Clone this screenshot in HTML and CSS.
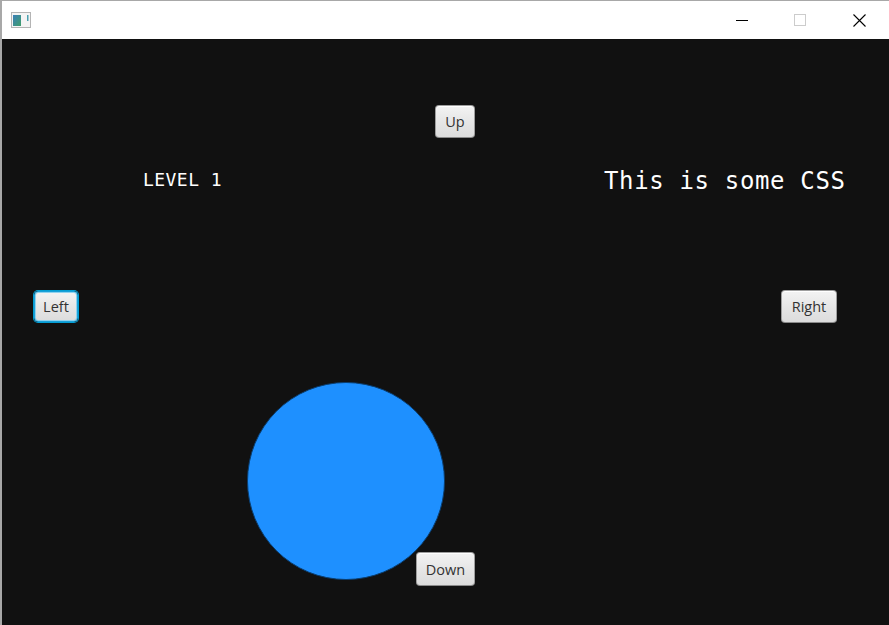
FILE: index.html
```html
<!DOCTYPE html>
<html>
<head>
<meta charset="utf-8">
<link rel="stylesheet" href="styles.css">
</head>
<body>
<div class="window">
  <div class="titlebar">
    <div class="app-icon">
      <svg width="20" height="16" viewBox="0 0 20 16">
        <defs>
          <linearGradient id="g" x1="0" y1="0" x2="1" y2="1">
            <stop offset="0" stop-color="#3b7fb8"/>
            <stop offset="1" stop-color="#3f9e6a"/>
          </linearGradient>
        </defs>
        <rect x="0.5" y="0.5" width="19" height="15" fill="#f4f4f4" stroke="#b4b4b4"/>
        <rect x="2" y="3" width="8" height="11" fill="url(#g)"/>
        <rect x="16" y="3" width="1.5" height="6" fill="#4aa0b0"/>
      </svg>
    </div>
    <div class="controls">
      <div class="ctl">
        <svg width="12" height="12" viewBox="0 0 12 12"><path d="M0 6.5H12" stroke="#000" stroke-width="1"/></svg>
      </div>
      <div class="ctl">
        <svg width="12" height="12" viewBox="0 0 12 12"><rect x="0.5" y="0.5" width="11" height="11" fill="none" stroke="#cccccc"/></svg>
      </div>
      <div class="ctl">
        <svg width="13" height="13" viewBox="0 0 13 13"><path d="M0.5 0.5L12.5 12.5M12.5 0.5L0.5 12.5" stroke="#000" stroke-width="1.1"/></svg>
      </div>
    </div>
  </div>
  <div class="scene">
    <div class="level">LEVEL 1</div>
    <div class="css-text">This is some CSS</div>
    <button class="btn btn-up">Up</button>
    <button class="btn btn-left focused">Left</button>
    <button class="btn btn-right">Right</button>
    <div class="ball"></div>
    <button class="btn btn-down">Down</button>
  </div>
</div>
</body>
</html>
```

FILE: styles.css
```css
html, body {
  margin: 0;
  padding: 0;
  width: 889px;
  height: 625px;
  overflow: hidden;
  background: #111111;
}

.window {
  width: 889px;
  height: 625px;
  display: flex;
  flex-direction: column;
  box-sizing: border-box;
  border-left: 2px solid #a8a8a8;
  border-top: 1px solid #a8a8a8;
}

.titlebar {
  height: 38px;
  flex: 0 0 38px;
  background: #ffffff;
  display: flex;
  align-items: center;
  justify-content: space-between;
}

.app-icon {
  width: 20px;
  height: 16px;
  margin-left: 9px;
  display: flex;
}

.controls {
  display: flex;
  height: 100%;
}

.ctl {
  width: 58px;
  height: 100%;
  display: flex;
  align-items: center;
  justify-content: center;
}

.controls .ctl:nth-child(3) {
  width: 60px;
}

.scene {
  position: relative;
  flex: 1;
  background: #111111;
  overflow: hidden;
  font-family: "DejaVu Sans Mono", "Liberation Mono", monospace;
  color: #ffffff;
}

.level {
  position: absolute;
  left: 141px;
  top: 130px;
  font-size: 18px;
  letter-spacing: 0.45px;
  line-height: 22px;
  white-space: pre;
}

.css-text {
  position: absolute;
  left: 602px;
  top: 128px;
  font-size: 24px;
  letter-spacing: 0.65px;
  line-height: 28px;
  white-space: pre;
}

.btn {
  position: absolute;
  box-sizing: border-box;
  height: 33px;
  padding: 0;
  margin: 0;
  font-family: "Open Sans", "Noto Sans", sans-serif;
  font-size: 14.5px;
  color: #333333;
  border: 1px solid #9e9e9e;
  border-bottom-color: #8a8a8a;
  border-radius: 4px;
  background: linear-gradient(#f3f3f3, #e6e6e6 50%, #dcdcdc);
  box-shadow: inset 0 1px 0 #ffffff;
  display: flex;
  align-items: center;
  justify-content: center;
}

.btn.focused {
  border: 1px solid #1aa0d8;
  box-shadow: 0 0 0 1px #039ed3, inset 0 0 0 1px #8fd3ef;
}

.btn-up {
  left: 433px;
  top: 66px;
  width: 40px;
}

.btn-left {
  left: 32px;
  top: 252px;
  width: 44px;
  height: 31px;
}

.btn-right {
  left: 779px;
  top: 251px;
  width: 56px;
}

.btn-down {
  left: 414px;
  top: 513px;
  width: 59px;
  height: 34px;
}

.ball {
  position: absolute;
  left: 245px;
  top: 343px;
  width: 198px;
  height: 198px;
  box-sizing: border-box;
  border-radius: 50%;
  background: #1e90ff;
  border: 1px solid #0a3e70;
}
```
